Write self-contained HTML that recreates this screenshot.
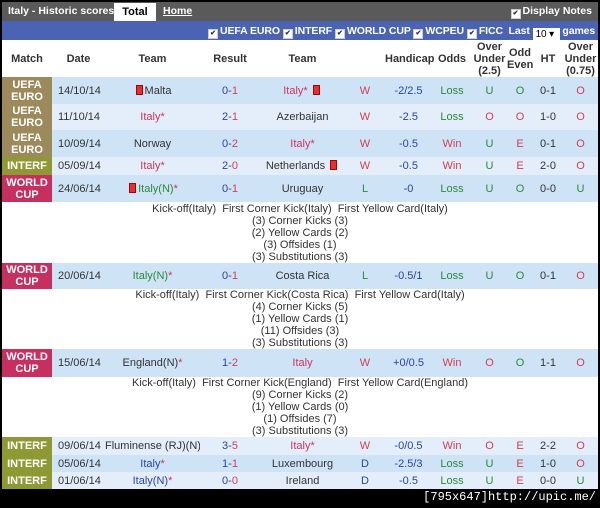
<!DOCTYPE html><html><head><style>
body{margin:0;width:600px;height:508px;background:#000;overflow:hidden;font-family:"Liberation Sans",Arial,sans-serif;font-size:11px;color:#333}
#w{position:absolute;left:2px;top:2px;width:596px;background:#fff}
#hd{height:19px;background:#5a5a5a;color:#fff;font-weight:bold;font-size:10.5px;position:relative}
#hd span{position:absolute;top:3px;white-space:nowrap;line-height:13px}
#tot{position:absolute;left:112px;top:1px;width:42px;height:18px;background:#fff;color:#000;text-align:center;line-height:18px;font-size:11px;font-weight:bold}
#fb{height:19px;background:#4a63b3;color:#fff;font-weight:bold;font-size:10.5px;position:relative;white-space:nowrap}
#fb>span{position:absolute;left:206px;top:4px;line-height:13px;white-space:nowrap;letter-spacing:-0.1px}
.cb{display:inline-block;width:8px;height:8px;background:#fff;border:1px solid #ccc;vertical-align:-1px;margin-right:2px;font-size:7px;color:#333;line-height:8px;text-align:center;font-style:normal}
table{border-collapse:collapse;table-layout:fixed;width:596px}
td{text-align:center;padding:0;overflow:hidden;white-space:nowrap}
th{font-weight:bold;color:#333;font-size:11px;line-height:12px;background:#fff;padding:0;white-space:normal}
td.m{color:#fff;font-weight:bold;font-size:11px;line-height:12px;white-space:normal;word-spacing:20px}
.a td{background:#cfe3f6}.b td{background:#e3eefa}
.a td.u,.b td.u{background:#9d8a5c}.a td.i,.b td.i{background:#8f9934}.a td.c,.b td.c{background:#c7305e}
.r{color:#c8375f}.bl{color:#2a44a8}.g{color:#2a8a3a}.rd{color:#d04050}
.n td{background:#fff;line-height:12px;font-size:11px;color:#333}
.f{display:inline-block;width:5px;height:8px;background:#d33;border:1px solid #a00;vertical-align:-1px;margin:0 2px}
</style></head><body>
<div id="w">
<div id="hd"><span style="left:6px">Italy - Historic scores</span><div id="tot">Total</div><span style="left:161px;text-decoration:underline">Home</span><span style="right:6px"><i class="cb">✔</i>Display Notes</span></div>
<div id="fb"><span><i class="cb">✔</i>UEFA EURO <i class="cb">✔</i>INTERF <i class="cb">✔</i>WORLD CUP <i class="cb">✔</i>WCPEU <i class="cb">✔</i>FICC &nbsp;Last <span style="display:inline-block;background:#fff;color:#000;width:24px;height:14px;font-weight:normal;font-size:10px;line-height:14px;text-align:left;padding-left:3px;vertical-align:-3px">10 ▾</span> games</span></div>
<table>
<colgroup><col style="width:50px"><col style="width:53px"><col style="width:95px"><col style="width:60px"><col style="width:85px"><col style="width:40px"><col style="width:47px"><col style="width:40px"><col style="width:35px"><col style="width:26px"><col style="width:30px"><col style="width:35px"></colgroup>
<tr style="height:37px"><th>Match</th><th>Date</th><th>Team</th><th>Result</th><th>Team</th><th></th><th>Handicap</th><th>Odds</th><th>Over Under (2.5)</th><th>Odd Even</th><th>HT</th><th>Over Under (0.75)</th></tr>
<tr class="a" style="height:27px"><td class="m u">UEFA EURO</td><td style="text-align:left;padding-left:6px">14/10/14</td><td><i class="f"></i>Malta</td><td class="bl">0-<span class="rd">1</span></td><td class="r">Italy* <i class="f"></i></td><td class="rd">W</td><td class="bl">-2/2.5</td><td class="g">Loss</td><td class="g">U</td><td class="g">O</td><td>0-1</td><td class="rd">O</td></tr>
<tr class="b" style="height:26px"><td class="m u">UEFA EURO</td><td style="text-align:left;padding-left:6px">11/10/14</td><td class="r">Italy*</td><td class="bl">2-<span class="rd">1</span></td><td>Azerbaijan</td><td class="rd">W</td><td class="bl">-2.5</td><td class="g">Loss</td><td class="rd">O</td><td class="rd">O</td><td>1-0</td><td class="rd">O</td></tr>
<tr class="a" style="height:27px"><td class="m u">UEFA EURO</td><td style="text-align:left;padding-left:6px">10/09/14</td><td>Norway</td><td class="bl">0-<span class="rd">2</span></td><td class="r">Italy*</td><td class="rd">W</td><td class="bl">-0.5</td><td class="rd">Win</td><td class="g">U</td><td class="rd">E</td><td>0-1</td><td class="rd">O</td></tr>
<tr class="b" style="height:18px"><td class="m i">INTERF</td><td style="text-align:left;padding-left:6px">05/09/14</td><td class="r">Italy*</td><td class="bl">2-<span class="rd">0</span></td><td>Netherlands <i class="f"></i></td><td class="rd">W</td><td class="bl">-0.5</td><td class="rd">Win</td><td class="g">U</td><td class="rd">E</td><td>2-0</td><td class="rd">O</td></tr>
<tr class="a" style="height:27px"><td class="m c">WORLD CUP</td><td style="text-align:left;padding-left:6px">24/06/14</td><td><i class="f"></i><span class="g">Italy(N)</span><span class="r">*</span></td><td class="bl">0-<span class="rd">1</span></td><td>Uruguay</td><td class="g">L</td><td class="bl">-0</td><td class="g">Loss</td><td class="g">U</td><td class="g">O</td><td>0-0</td><td class="g">U</td></tr>
<tr class="n" style="height:61px"><td colspan="12">Kick-off(Italy) &nbsp;First Corner Kick(Italy) &nbsp;First Yellow Card(Italy)<br>(3) Corner Kicks (3)<br>(2) Yellow Cards (2)<br>(3) Offsides (1)<br>(3) Substitutions (3)</td></tr>
<tr class="a" style="height:26px"><td class="m c">WORLD CUP</td><td style="text-align:left;padding-left:6px">20/06/14</td><td><span class="g">Italy(N)</span><span class="r">*</span></td><td class="bl">0-<span class="rd">1</span></td><td>Costa Rica</td><td class="g">L</td><td class="bl">-0.5/1</td><td class="g">Loss</td><td class="g">U</td><td class="g">O</td><td>0-1</td><td class="rd">O</td></tr>
<tr class="n" style="height:59px"><td colspan="12">Kick-off(Italy) &nbsp;First Corner Kick(Costa Rica) &nbsp;First Yellow Card(Italy)<br>(4) Corner Kicks (5)<br>(1) Yellow Cards (1)<br>(11) Offsides (3)<br>(3) Substitutions (3)</td></tr>
<tr class="a" style="height:28px"><td class="m c">WORLD CUP</td><td style="text-align:left;padding-left:6px">15/06/14</td><td>England(N)<span class="r">*</span></td><td class="bl">1-<span class="rd">2</span></td><td class="r">Italy</td><td class="rd">W</td><td class="bl">+0/0.5</td><td class="rd">Win</td><td class="rd">O</td><td class="g">O</td><td>1-1</td><td class="rd">O</td></tr>
<tr class="n" style="height:60px"><td colspan="12">Kick-off(Italy) &nbsp;First Corner Kick(England) &nbsp;First Yellow Card(England)<br>(9) Corner Kicks (2)<br>(1) Yellow Cards (0)<br>(1) Offsides (7)<br>(3) Substitutions (3)</td></tr>
<tr class="b" style="height:18px"><td class="m i">INTERF</td><td style="text-align:left;padding-left:6px">09/06/14</td><td>Fluminense (RJ)(N)</td><td class="bl">3-<span class="rd">5</span></td><td class="r">Italy*</td><td class="rd">W</td><td class="bl">-0/0.5</td><td class="rd">Win</td><td class="rd">O</td><td class="rd">E</td><td>2-2</td><td class="rd">O</td></tr>
<tr class="a" style="height:17px"><td class="m i">INTERF</td><td style="text-align:left;padding-left:6px">05/06/14</td><td><span class="bl">Italy</span><span class="r">*</span></td><td class="bl">1-<span class="rd">1</span></td><td>Luxembourg</td><td class="bl">D</td><td class="bl">-2.5/3</td><td class="g">Loss</td><td class="g">U</td><td class="rd">E</td><td>1-0</td><td class="rd">O</td></tr>
<tr class="b" style="height:17px"><td class="m i">INTERF</td><td style="text-align:left;padding-left:6px">01/06/14</td><td><span class="bl">Italy(N)</span><span class="r">*</span></td><td class="bl">0-<span class="rd">0</span></td><td>Ireland</td><td class="bl">D</td><td class="bl">-0.5</td><td class="g">Loss</td><td class="g">U</td><td class="rd">E</td><td>0-0</td><td class="g">U</td></tr>
</table></div>
<div style="position:absolute;right:4px;top:490px;color:#fff;font-family:'Liberation Mono',monospace;font-size:12px">[795x647]http://upic.me/</div>
</body></html>
